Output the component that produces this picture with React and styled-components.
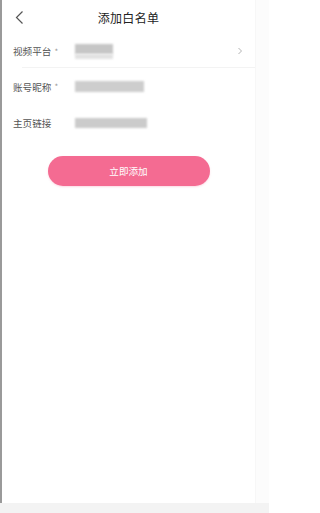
import React from 'react';
import styled, { createGlobalStyle } from 'styled-components';

const GlobalStyle = createGlobalStyle`
  html, body {
    margin: 0;
    padding: 0;
    background: #fff;
    font-family: "Noto Sans CJK SC", "Noto Sans", sans-serif;
  }
`;

const Screen = styled.div`
  width: 269px;
  height: 513px;
  display: flex;
  flex-direction: column;
  overflow: hidden;
`;

const Viewport = styled.div`
  flex: 1;
  display: flex;
  border-left: 2px solid #9a9a9a;
`;

const Page = styled.div`
  flex: 0 0 253px;
  display: flex;
  flex-direction: column;
`;

const SideStrip = styled.div`
  flex: 1;
  background: #fcfcfc;
  border-left: 1px solid #f7f7f7;
`;

const BottomBar = styled.div`
  height: 10px;
  background: #f3f3f3;
`;

const Header = styled.div`
  height: 34px;
  display: grid;
  grid-template-columns: 1fr auto 1fr;
  align-items: center;
  padding: 0 12px;
`;

const BackButton = styled.div`
  display: flex;
  align-items: center;
`;

const Title = styled.div`
  font-size: 12px;
  color: #222;
  letter-spacing: 0.3px;
`;

const Form = styled.div`
  display: flex;
  flex-direction: column;
`;

const Row = styled.div`
  height: ${(p) => p.$h}px;
  display: flex;
  align-items: center;
  padding: 0 12px 0 11px;
  position: relative;

  &::after {
    content: '';
    display: ${(p) => (p.$divider ? 'block' : 'none')};
    position: absolute;
    left: 20px;
    right: 0;
    bottom: 0;
    height: 1px;
    background: #f3f3f3;
  }
`;

const Label = styled.div`
  width: 62px;
  font-size: 9.6px;
  color: #555;
  display: flex;
  align-items: center;
  gap: 3px;
`;

const Star = styled.span`
  color: #999;
  font-size: 8px;
`;

const Blurred = styled.div`
  width: ${(p) => p.$w}px;
  height: ${(p) => p.$h}px;
  background: ${(p) => p.$bg || '#c9c9c9'};
  filter: blur(1.2px);
`;

const Value = styled.div`
  flex: 1;
  display: flex;
  align-items: center;
`;

const Arrow = styled.div`
  display: flex;
  align-items: center;
`;

const ButtonWrap = styled.div`
  display: flex;
  justify-content: center;
  margin-top: 16px;
`;

const SubmitButton = styled.button`
  width: 162px;
  height: 30px;
  border: none;
  border-radius: 15px;
  background: #f46b92;
  color: #fff;
  font-family: inherit;
  font-size: 9.6px;
  box-shadow: 0 1px 2px rgba(244, 107, 146, 0.25);
`;

const App = () => (
  <Screen>
    <GlobalStyle />
    <Viewport>
      <Page>
        <Header>
          <BackButton>
            <svg width="12" height="15" viewBox="0 0 12 15">
              <polyline points="8.5,1.5 2.5,7.5 8.5,13.5" fill="none" stroke="#555" strokeWidth="1.2" />
            </svg>
          </BackButton>
          <Title>添加白名单</Title>
          <div />
        </Header>
        <Form>
          <Row $h={34} $divider>
            <Label>视频平台<Star>*</Star></Label>
            <Value>
              <div>
                <Blurred $w={38} $h={10} $bg="#c6c6c6" />
                <Blurred $w={38} $h={5} $bg="#e2e2e2" />
              </div>
            </Value>
            <Arrow>
              <svg width="6" height="8" viewBox="0 0 6 8">
                <polyline points="1.5,1 4.5,4 1.5,7" fill="none" stroke="#aaa" strokeWidth="0.9" />
              </svg>
            </Arrow>
          </Row>
          <Row $h={37}>
            <Label>账号昵称<Star>*</Star></Label>
            <Value>
              <Blurred $w={69} $h={11} $bg="#cdcdcd" />
            </Value>
          </Row>
          <Row $h={35}>
            <Label>主页链接</Label>
            <Value>
              <Blurred $w={72} $h={10} $bg="#cbcbcb" />
            </Value>
          </Row>
        </Form>
        <ButtonWrap>
          <SubmitButton>立即添加</SubmitButton>
        </ButtonWrap>
      </Page>
      <SideStrip />
    </Viewport>
    <BottomBar />
  </Screen>
);

export default App;
